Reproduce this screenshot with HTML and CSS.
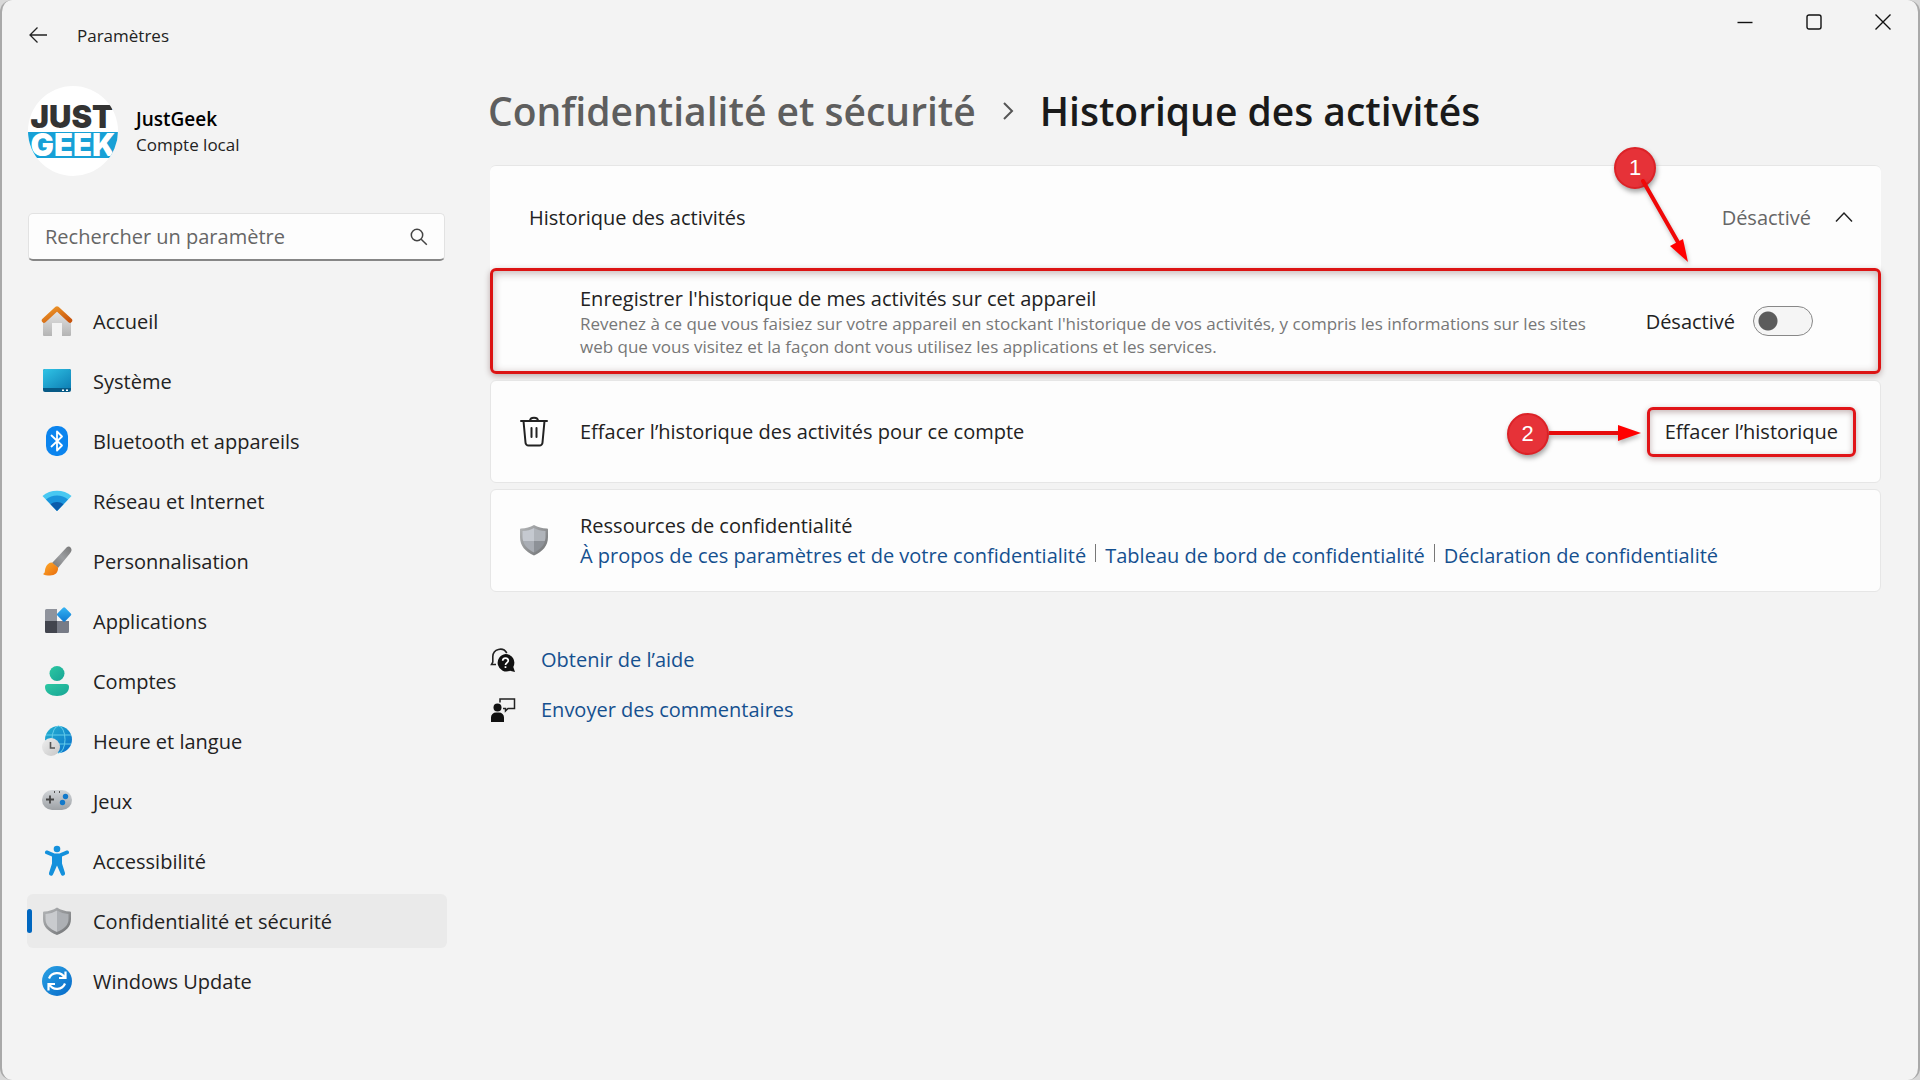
FILE: index.html
```html
<!DOCTYPE html>
<html lang="fr">
<head>
  <meta charset="UTF-8">
  <meta name="viewport" content="width=device-width, initial-scale=1">
  <title>Paramètres</title>
  <link rel="stylesheet" href="styles.css">
</head>
<body>

<div class="window">
  <header class="titlebar">
    <button class="back" type="button" aria-label="Retour">
      <svg width="18" height="16" viewBox="0 0 18 16" fill="none" stroke="#222" stroke-width="1.3"><path d="M18 8H1M8.500 .500L1 8l7.500 7.500"/></svg>
    </button>
    <span class="app-name">Paramètres</span>
    <div class="caption">
      <button type="button" aria-label="Réduire">
        <svg width="16" height="16" viewBox="0 0 16 16" fill="none" stroke="#111" stroke-width="1.4"><path d="M.500 8.500h15"/></svg>
      </button>
      <button type="button" aria-label="Agrandir">
        <svg width="16" height="16" viewBox="0 0 16 16" fill="none" stroke="#111" stroke-width="1.400"><rect x="1" y="1" width="14" height="14" rx="2"/></svg>
      </button>
      <button type="button" aria-label="Fermer">
        <svg width="16" height="16" viewBox="0 0 16 16" fill="none" stroke="#111" stroke-width="1.400"><path d="M.500.500l15 15M15.500.500l-15 15"/></svg>
      </button>
    </div>
  </header>

  <div class="layout">
    <aside class="sidebar">
      <div class="profile">
        <svg class="avatar" width="90" height="90" viewBox="0 0 90 90">
          <defs><clipPath id="round"><circle cx="45" cy="45" r="45"/></clipPath></defs>
          <g clip-path="url(#round)">
            <rect width="90" height="90" fill="#fff"/>
            <rect y="46" width="90" height="26" fill="#17a0d6"/>
            <text class="logo"><tspan x="44" y="42" fill="#333">JUST</tspan><tspan x="45" y="70" fill="#fff">GEEK</tspan></text>
          </g>
        </svg>
        <div>
          <div class="user">JustGeek</div>
          <div class="account">Compte local</div>
        </div>
      </div>

      <form class="search">
        <input type="search" placeholder="Rechercher un paramètre" aria-label="Rechercher un paramètre">
        <button type="submit" aria-label="Rechercher">
          <svg width="18" height="18" viewBox="0 0 18 18" fill="none" stroke="#444" stroke-width="1.500"><circle cx="7" cy="7" r="5.700"/><path d="M11.200 11.200l5.600 5.600"/></svg>
        </button>
      </form>

      <nav class="menu">
        <a href="#accueil">
          <svg width="32" height="32" viewBox="0 0 32 32">
            <defs>
              <linearGradient id="wall" x1="0" y1="0" x2="0" y2="1"><stop offset="0" stop-color="#e8e8e8"/><stop offset="1" stop-color="#b4b4b4"/></linearGradient>
              <linearGradient id="roof" x1="0" y1="0" x2="1" y2="1"><stop offset="0" stop-color="#f09a2a"/><stop offset="1" stop-color="#c8540c"/></linearGradient>
            </defs>
            <path fill="url(#wall)" d="M2 16L16 4l14 12v14a1 1 0 0 1-1 1h-8V18H11v13H3a1 1 0 0 1-1-1z"/>
            <path fill="none" stroke="url(#roof)" stroke-width="4.500" stroke-linejoin="round" stroke-linecap="round" d="M3 15.500L16 3.500l13 12"/>
          </svg>
          <span>Accueil</span>
        </a>
        <a href="#systeme">
          <svg width="32" height="32" viewBox="0 0 32 32">
            <defs><linearGradient id="screen" x1="0" y1="0" x2="1" y2="1"><stop offset="0" stop-color="#30c4e6"/><stop offset="1" stop-color="#0e7fb5"/></linearGradient></defs>
            <rect x="2" y="4" width="28" height="23" rx="2" fill="#075a86"/>
            <path fill="url(#screen)" d="M4 4h24a2 2 0 0 1 2 2v17H2V6a2 2 0 0 1 2-2z"/>
            <path fill="#fff" d="M21 24.500h2v1.500h-2zM25 24.500h2v1.500h-2z"/>
          </svg>
          <span>Système</span>
        </a>
        <a href="#bluetooth">
          <svg width="32" height="32" viewBox="0 0 32 32">
            <rect x="5" y="1" width="22" height="30" rx="10" fill="#0b84ee"/>
            <path fill="none" stroke="#fff" stroke-width="1.800" stroke-linejoin="round" stroke-linecap="round" d="M10.500 10.500l10.500 10-5 5V6.500l5 5-10.500 10"/>
          </svg>
          <span>Bluetooth et appareils</span>
        </a>
        <a href="#reseau">
          <svg width="32" height="32" viewBox="0 0 32 32">
            <path fill="#48c8f2" d="M1.500 11C9 4 23 4 30.500 11L16 26z"/>
            <path fill="#1a94dc" d="M5 14.600c6-5.400 16-5.400 22 0L16 26z"/>
            <path fill="#0b5cab" d="M9.500 19.200c4-3 9-3 13 0L16 26z"/>
          </svg>
          <span>Réseau et Internet</span>
        </a>
        <a href="#personnalisation">
          <svg width="32" height="32" viewBox="0 0 32 32">
            <defs>
              <linearGradient id="handle" x1="0" y1="1" x2="1" y2="0"><stop offset="0" stop-color="#777"/><stop offset=".5" stop-color="#9c9ea1"/><stop offset="1" stop-color="#777"/></linearGradient>
              <linearGradient id="bristle" x1="0" y1="0" x2="1" y2="1"><stop offset="0" stop-color="#ffac2c"/><stop offset="1" stop-color="#e86c0c"/></linearGradient>
            </defs>
            <path fill="url(#handle)" d="M26 2c2-1.600 5 .500 4.500 3.500-.200 1-1 2.300-2 3.500L17 23l-6-5z"/>
            <path fill="url(#bristle)" d="M11 17.500l6 5c.500 5-3 8-8 8-3 0-6-.500-7-1.500 2.500-1 1.500-3 2.500-6 1-3.500 3.500-5.500 6.500-5.500z"/>
          </svg>
          <span>Personnalisation</span>
        </a>
        <a href="#applications">
          <svg width="32" height="32" viewBox="0 0 32 32">
            <defs><linearGradient id="tile" x1="0" y1="0" x2="1" y2="1"><stop offset="0" stop-color="#37b6f4"/><stop offset="1" stop-color="#0f78d0"/></linearGradient></defs>
            <path fill="#8f939c" d="M5.500 4H16v12H4V5.500A1.500 1.500 0 0 1 5.500 4z"/>
            <path fill="#42454e" d="M4 16h12v12H5.500A1.500 1.500 0 0 1 4 26.500z"/>
            <path fill="#777b86" d="M16 16h12v10.500a1.500 1.500 0 0 1-1.500 1.500H16z"/>
            <rect x="17.600" y="4" width="11" height="11" rx="1.500" fill="url(#tile)" transform="rotate(45 23.100 9.500)"/>
          </svg>
          <span>Applications</span>
        </a>
        <a href="#comptes">
          <svg width="32" height="32" viewBox="0 0 32 32">
            <defs><linearGradient id="person" x1="0" y1="0" x2="1" y2="1"><stop offset="0" stop-color="#2cc8a2"/><stop offset="1" stop-color="#17a495"/></linearGradient></defs>
            <circle cx="16" cy="8.500" r="7.500" fill="url(#person)"/>
            <path fill="url(#person)" d="M7 19h18a3 3 0 0 1 3 3c0 6-6 9-12 9S4 28 4 22a3 3 0 0 1 3-3z"/>
          </svg>
          <span>Comptes</span>
        </a>
        <a href="#heure">
          <svg width="32" height="32" viewBox="0 0 32 32">
            <defs>
              <linearGradient id="globe" x1="0" y1="0" x2="1" y2="1"><stop offset="0" stop-color="#25b4d0"/><stop offset="1" stop-color="#0b6fcb"/></linearGradient>
              <linearGradient id="clock" x1="0" y1="0" x2="1" y2="1"><stop offset="0" stop-color="#efefef"/><stop offset="1" stop-color="#c6c6c6"/></linearGradient>
            </defs>
            <circle cx="17.500" cy="14.500" r="13.500" fill="url(#globe)"/>
            <g fill="none" stroke="#64cdea" stroke-width="1"><ellipse cx="17.500" cy="14.500" rx="6.500" ry="13.500"/><path d="M5 10h25M5 19h25"/></g>
            <circle cx="10" cy="22" r="9" fill="url(#clock)"/>
            <path fill="none" stroke="#555" stroke-width="1.600" d="M9.500 17v6H14"/>
          </svg>
          <span>Heure et langue</span>
        </a>
        <a href="#jeux">
          <svg width="32" height="32" viewBox="0 0 32 32">
            <defs><linearGradient id="pad" x1="0" y1="0" x2="0" y2="1"><stop offset="0" stop-color="#d3d6d9"/><stop offset="1" stop-color="#9da1a5"/></linearGradient></defs>
            <rect x="1" y="5" width="30" height="20" rx="10" fill="url(#pad)"/>
            <path stroke="#444" stroke-width="1.800" d="M9 10.500v8M5 14.500h8"/>
            <path stroke="#555" stroke-width="1" d="M13.500 6v2M18.500 6v2"/>
            <circle cx="24.500" cy="11.500" r="2.700" fill="#1379ca"/>
            <circle cx="21.500" cy="17.500" r="2.700" fill="#1379ca"/>
          </svg>
          <span>Jeux</span>
        </a>
        <a href="#accessibilite">
          <svg width="32" height="32" viewBox="0 0 32 32">
            <circle cx="16" cy="4" r="3.300" fill="#1390dc"/>
            <path fill="#1390dc" d="M6.500 5.500l7 3h5l7-3c2.500-.800 3.500 2.500 1.500 3.500L21 11.500v7l3 9.500c.500 2.700-3 3.700-4 1.500l-4-9-4 9c-1 2.200-4.500 1.200-4-1.500l3-9.500v-7L5 9C3 8 4 4.700 6.500 5.500z"/>
          </svg>
          <span>Accessibilité</span>
        </a>
        <a class="active" href="#confidentialite" aria-current="page">
          <svg width="32" height="32" viewBox="0 0 32 32">
            <defs><linearGradient id="edge" x1="0" y1="0" x2="1" y2="1"><stop offset="0" stop-color="#b5b7b9"/><stop offset="1" stop-color="#6f7173"/></linearGradient></defs>
            <path fill="url(#edge)" d="M16 2.500c4 2.500 8 3.800 13 4a1 1 0 0 1 1 1V14c0 8-5.500 12.500-14 16C7.500 26.500 2 22 2 14V7.500a1 1 0 0 1 1-1c5-.200 9-1.500 13-4z"/>
            <path fill="#c9cbce" d="M16 5.500V27C8.500 23.800 4.500 20 4.500 14V9c4.500-.300 8-1.500 11.500-3.500z"/>
            <path fill="#adb0b4" d="M16 5.500V27c7.500-3.200 11.500-7 11.500-13V9c-4.500-.300-8-1.500-11.500-3.500z"/>
          </svg>
          <span>Confidentialité et sécurité</span>
        </a>
        <a href="#update">
          <svg width="32" height="32" viewBox="0 0 32 32">
            <defs><linearGradient id="sync" x1="0" y1="0" x2="1" y2="1"><stop offset="0" stop-color="#2aa2e4"/><stop offset="1" stop-color="#0669c8"/></linearGradient></defs>
            <circle cx="16" cy="16" r="15" fill="url(#sync)"/>
            <g fill="none" stroke="#fff" stroke-width="2.200"><path d="M8 13.500c2.500-6.500 12-7.500 15.500-1M24.500 6.500v6.500h-6.500M24 18.500c-2.500 6.500-12 7.500-15.500 1M7.500 25.500V19H14"/></g>
          </svg>
          <span>Windows Update</span>
        </a>
      </nav>
    </aside>

    <main class="content">
      <h1 class="breadcrumb">
        <a href="#confidentialite">Confidentialité et sécurité</a>
        <svg width="12" height="18" viewBox="0 0 12 18" fill="none" stroke="#555" stroke-width="2"><path d="M2 1l8 8-8 8"/></svg>
        <span>Historique des activités</span>
      </h1>

      <div class="cards">
        <section class="card expander">
          <button class="expander-head" type="button" aria-expanded="true">
            <span class="label">Historique des activités</span>
            <span class="state">Désactivé</span>
            <svg width="18" height="12" viewBox="0 0 18 12" fill="none" stroke="#222" stroke-width="1.500"><path d="M1 10.500L9 2l8 8.500"/></svg>
          </button>
          <div class="setting highlight">
            <div class="setting-text">
              <label for="history">Enregistrer l'historique de mes activités sur cet appareil</label>
              <p>Revenez à ce que vous faisiez sur votre appareil en stockant l'historique de vos activités, y compris les informations sur les sites web que vous visitez et la façon dont vous utilisez les applications et les services.</p>
            </div>
            <span>Désactivé</span>
            <input class="toggle" type="checkbox" role="switch" id="history">
          </div>
          <div class="step step-one">
            <span class="step-number">1</span>
            <svg class="arrow" width="60" height="96" viewBox="0 0 60 96">
              <path stroke="#f00808" stroke-width="4" stroke-linecap="round" d="M9 13L45 76"/>
              <path fill="#f00" d="M54 94L36 78l13-7z"/>
            </svg>
          </div>
        </section>

        <section class="card row">
          <svg class="row-icon" width="32" height="32" viewBox="0 0 32 32" fill="none" stroke="#222" stroke-width="2" stroke-linecap="round" stroke-linejoin="round"><path d="M3 5h26M5.500 5l2 21.500a3 3 0 0 0 3 3h11a3 3 0 0 0 3-3l2-21.500M12 5c0-4.500 8-4.500 8 0M13.500 12v9M18.500 12v9"/></svg>
          <span class="label">Effacer l’historique des activités pour ce compte</span>
          <div class="action">
            <div class="step step-two">
              <span class="step-number">2</span>
              <svg class="arrow" width="92" height="18" viewBox="0 0 92 18">
                <path stroke="#e60c0c" stroke-width="4" d="M0 8h72"/>
                <path fill="#f00" d="M92 8L69 16V0z"/>
              </svg>
            </div>
            <button class="clear" type="button">Effacer l’historique</button>
          </div>
        </section>

        <section class="card row">
          <svg class="row-icon" width="32" height="32" viewBox="0 0 32 32">
            <path fill="url(#edge)" d="M16 0c4 2.500 8 3.300 13 3.500a1 1 0 0 1 1 1V12c0 9-5.500 14.500-14 18.500C7.500 26.500 2 21 2 12V4.500a1 1 0 0 1 1-1C8 3.300 12 2.500 16 0z"/>
            <path fill="#c5c9d0" d="M16 3v13H5.200c-.500-1.300-.700-2.600-.700-4V6C9 5.700 12.500 5 16 3z"/>
            <path fill="#b0b4ba" d="M16 3v13h10.800c.500-1.300.700-2.600.700-4V6C23 5.700 19.500 5 16 3z"/>
            <path fill="#a9adb4" d="M5.200 16H16v11.500C10.500 24.800 6.600 21.500 5.200 16z"/>
            <path fill="#8d9197" d="M26.800 16H16v11.500c5.500-2.700 9.400-6 10.800-11.500z"/>
          </svg>
          <div class="resources">
            <div>Ressources de confidentialité</div>
            <div class="links">
              <a href="#a-propos">À propos de ces paramètres et de votre confidentialité</a>
              <a href="#tableau">Tableau de bord de confidentialité</a>
              <a href="#declaration">Déclaration de confidentialité</a>
            </div>
          </div>
        </section>
      </div>

      <ul class="help">
        <li>
          <svg width="26" height="26" viewBox="0 0 26 26">
            <path fill="none" stroke="#222" stroke-width="1.600" d="M6 17.500H1.500l1.300-2.500V9.500a7.500 7.500 0 0 1 14-3.500"/>
            <path fill="#111" d="M15.500 7a8.800 8.800 0 0 1 7.800 13l1.700 5-5-1.200A8.800 8.800 0 1 1 15.500 7z"/>
            <path fill="none" stroke="#fff" stroke-width="1.700" d="M12.700 13.800c0-3.600 5.600-3.600 5.600 0 0 2-2.800 2-2.800 4.200M15.500 19.300v1.700"/>
          </svg>
          <a href="#aide">Obtenir de l’aide</a>
        </li>
        <li>
          <svg width="26" height="26" viewBox="0 0 26 26">
            <circle cx="7.500" cy="10.500" r="4" fill="#111"/>
            <path fill="#111" d="M1 25v-4.500a5 5 0 0 1 5-5h3a5 5 0 0 1 5 5V25z"/>
            <path fill="none" stroke="#222" stroke-width="1.500" d="M10 5.500V2h14.500v9.500H18l-2.500 2.500v-2.500H13"/>
          </svg>
          <a href="#commentaires">Envoyer des commentaires</a>
        </li>
      </ul>
    </main>
  </div>
</div>

</body>
</html>
```

FILE: styles.css
```css
* {
  box-sizing: border-box;
}

body {
  margin: 0;
  background: #d8d8d8;
  color: #222;
  font: 20px/27px 'Open Sans', 'Noto Sans', sans-serif;
}

button,
input {
  font: inherit;
  color: inherit;
}

button {
  padding: 0;
  border: 0;
  background: none;
}

a {
  color: #15508f;
  text-decoration: none;
}

svg {
  display: block;
  flex: none;
}

.window {
  min-height: 100vh;
  border: solid #a9a9a9;
  border-width: 0 2px;
  border-radius: 12px;
  background: #f3f3f3;
}

.titlebar {
  display: flex;
  align-items: center;
  height: 70px;
  padding: 0 1px 0 27px;
}

.back {
  margin-right: 30px;
}

.app-name {
  font-size: 17px;
}

.caption {
  display: flex;
  align-self: flex-start;
  margin-left: auto;
}

.caption button {
  display: grid;
  place-items: center;
  width: 69px;
  height: 44px;
}

.layout {
  display: flex;
  gap: 43px;
  padding: 16px 37px 40px 25px;
}

.sidebar {
  flex: none;
  width: 420px;
}

.profile {
  display: flex;
  align-items: center;
  gap: 18px;
  margin: 0 0 37px 1px;
}

.logo {
  font: 900 31px Inter, sans-serif;
  text-anchor: middle;
}

.user {
  padding-top: 2px;
  color: #000;
  font-size: 19px;
  font-weight: 600;
  line-height: 25px;
}

.account {
  font-size: 17px;
  line-height: 25px;
}

.search {
  display: flex;
  align-items: center;
  height: 48px;
  margin: 0 2px 33px 1px;
  padding: 0 16px;
  border: 1px solid #e2e2e2;
  border-bottom: 2px solid #868686;
  border-radius: 5px;
  background: #fdfdfd;
}

.search input {
  flex: 1;
  min-width: 0;
  padding: 0;
  border: 0;
  outline: 0;
  background: none;
}

.search input::placeholder {
  color: #666;
}

.menu {
  display: grid;
  gap: 6px;
}

.menu a {
  display: flex;
  align-items: center;
  gap: 20px;
  height: 54px;
  padding-left: 14px;
  border-radius: 6px;
  color: #222;
}

.menu .active {
  position: relative;
  background: #eaeaea;
}

.menu .active:before {
  content: '';
  position: absolute;
  left: 0;
  width: 5px;
  height: 24px;
  border-radius: 3px;
  background: #0067c0;
}

.content {
  flex: 1;
  min-width: 0;
}

.breadcrumb {
  display: flex;
  align-items: center;
  gap: 26px;
  margin: 0 0 29px -2px;
  color: #1a1a1a;
  font-size: 39px;
  font-weight: 600;
  line-height: 50px;
}

.breadcrumb a {
  color: #5e5e5e;
}

.cards {
  display: grid;
  gap: 6px;
}

.card {
  position: relative;
  border: 1px solid #e6e6e6;
  border-radius: 6px;
  background: #fdfdfd;
}

.expander {
  border-width: 1px 0 0;
}

.expander-head {
  display: flex;
  align-items: center;
  width: 100%;
  height: 102px;
  padding: 0 28px 0 39px;
  text-align: left;
}

.label {
  flex: 1;
}

.state {
  margin-right: 24px;
  color: #666;
}

.setting {
  display: flex;
  align-items: center;
  min-height: 106px;
  padding: 0 65px 0 87px;
}

.highlight {
  border: 3px solid #dc1414;
  border-radius: 6px;
  box-shadow: 0 2px 6px rgba(60, 0, 0, 0.3), inset 0 2px 8px rgba(60, 0, 0, 0.3);
}

.setting-text {
  flex: 1;
  margin-right: 36px;
}

.setting-text p {
  margin: 0;
  color: #777;
  font-size: 17px;
  line-height: 23px;
}

.toggle {
  appearance: none;
  width: 60px;
  height: 30px;
  margin: 0 0 0 18px;
  border: 1px solid #888;
  border-radius: 15px;
  background: radial-gradient(circle at 14px 14px, #5c5c5c 9px, transparent 10px) #f5f5f5;
}

.toggle:checked {
  border-color: #0067c0;
  background: radial-gradient(circle at 44px 14px, #fff 9px, transparent 10px) #0067c0;
}

.row {
  display: flex;
  align-items: center;
  min-height: 103px;
  padding: 0 24px 0 27px;
}

.row-icon {
  margin-right: 30px;
}

.action {
  position: relative;
}

.clear {
  height: 50px;
  padding: 0 15px;
  border: 3px solid #e01418;
  border-radius: 6px;
  box-shadow: 0 2px 6px rgba(60, 0, 0, 0.3), inset 0 2px 6px rgba(60, 0, 0, 0.3);
}

/* numbered callouts lying over the cards */
.step {
  position: absolute;
}

.step-number {
  display: grid;
  place-items: center;
  width: 42px;
  height: 42px;
  border: 2px solid #dc2227;
  border-radius: 50%;
  background: #e63238;
  box-shadow: 1px 3px 5px rgba(0, 0, 0, 0.35);
  color: #fff;
  font: 22px 'Liberation Sans', sans-serif;
}

.arrow {
  filter: drop-shadow(1px 3px 2px rgba(0, 0, 0, 0.25));
}

.step-one {
  top: -19px;
  right: 225px;
}

.step-one .arrow {
  position: absolute;
  top: 21px;
  left: 20px;
}

.step-two {
  top: 6px;
  right: 100%;
  display: flex;
  align-items: center;
  padding-right: 6px;
}

.links {
  display: flex;
  flex-wrap: wrap;
  margin-top: 3px;
}

.links a + a {
  margin-left: 9px;
  padding-left: 10px;
  background: linear-gradient(#777, #777) 0 2px / 1px 18px no-repeat;
}

.help {
  display: grid;
  gap: 23px;
  margin: 54px 0 0;
  padding: 0;
  list-style: none;
}

.help li {
  display: flex;
  align-items: center;
  gap: 25px;
}
```
